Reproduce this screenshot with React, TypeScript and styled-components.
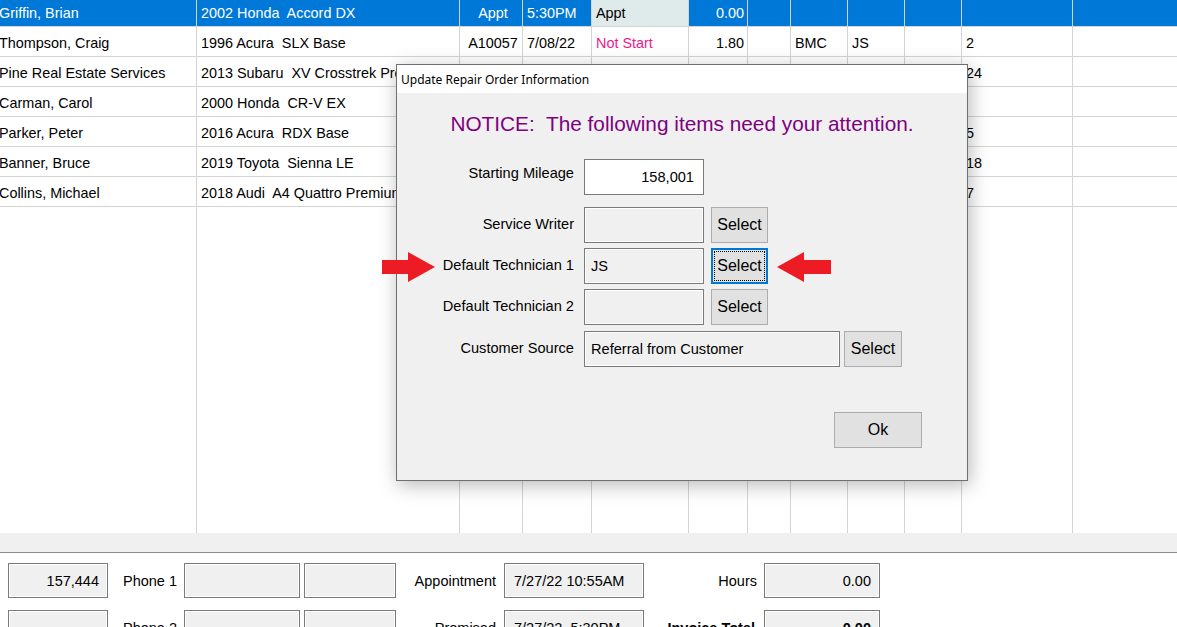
import React from 'react';
import styled, { createGlobalStyle } from 'styled-components';

const GlobalStyle = createGlobalStyle`
  html, body {
    margin: 0;
    padding: 0;
    background: #ffffff;
    overflow: hidden;
  }
  body {
    font-family: 'Liberation Sans', Arial, sans-serif;
    font-size: 14px;
    color: #000000;
  }
  * {
    box-sizing: border-box;
  }
`;

const COLS = '197px 263px 63px 69px 97px 59px 43px 57px 57px 57px 111px 104px';

const Page = styled.div`
  position: relative;
  width: 1177px;
  height: 627px;
  display: flex;
  flex-direction: column;
  overflow: hidden;
`;

const GridArea = styled.div`
  height: 533px;
  flex-shrink: 0;
  overflow: hidden;
  background: #ffffff;
`;

const GridBody = styled.div`
  margin-top: -3px;
  height: 536px;
  display: flex;
  flex-direction: column;
`;

const Row = styled.div<{ $selected?: boolean }>`
  display: grid;
  grid-template-columns: ${COLS};
  height: 30px;
  flex-shrink: 0;
  border-bottom: 1px solid #d4d4d4;
  background: ${p => (p.$selected ? '#0078d7' : '#ffffff')};
  color: ${p => (p.$selected ? '#ffffff' : '#000000')};
`;

const FillerRow = styled.div`
  flex: 1;
  display: grid;
  grid-template-columns: ${COLS};
`;

const Cell = styled.div<{ $align?: 'left' | 'right' | 'center'; $bg?: string; $color?: string; $first?: boolean }>`
  border-right: 1px solid #d4d4d4;
  display: flex;
  align-items: center;
  justify-content: ${p => (p.$align === 'right' ? 'flex-end' : p.$align === 'center' ? 'center' : 'flex-start')};
  padding: ${p => (p.$first ? '0' : p.$align === 'right' ? '0 3px 0 0' : '0 0 0 4px')};
  padding-top: 2px;
  white-space: pre;
  overflow: hidden;
  background: ${p => p.$bg || 'transparent'};
  color: ${p => p.$color || 'inherit'};
  font-size: 14.4px;

  &:last-child {
    border-right: none;
  }
`;

const CellText = styled.span<{ $shift?: number }>`
  margin-left: ${p => p.$shift || 0}px;
`;

const Band = styled.div`
  height: 20px;
  flex-shrink: 0;
  background: #f0f0f0;
  border-bottom: 1px solid #8c8c8c;
`;

const BottomForm = styled.div`
  flex: 1;
  min-height: 0;
  background: #ffffff;
  display: grid;
  grid-template-columns: 100px 76px 116px 96px 108px 140px 120px 116px;
  grid-auto-rows: 35px;
  row-gap: 12px;
  padding: 10px 0 0 8px;
  font-size: 14.5px;
`;

const FormLabel = styled.div<{ $bold?: boolean; $pad: number }>`
  display: flex;
  align-items: center;
  justify-content: flex-end;
  padding-right: ${p => p.$pad}px;
  font-weight: ${p => (p.$bold ? 'bold' : 'normal')};
  white-space: nowrap;
`;

const InfoField = styled.div<{ $align?: 'left' | 'right'; $width?: number; $bold?: boolean }>`
  width: ${p => (p.$width ? `${p.$width}px` : '100%')};
  justify-self: end;
  height: 35px;
  background: #f0f0f0;
  border: 1px solid #7a7a7a;
  box-shadow: inset 0 0 0 1px #ffffff;
  display: flex;
  align-items: center;
  justify-content: ${p => (p.$align === 'right' ? 'flex-end' : 'flex-start')};
  padding: 0 8px 0 9px;
  white-space: pre;
  font-weight: ${p => (p.$bold ? 'bold' : 'normal')};
`;

/* dialog */

const Dialog = styled.div`
  position: absolute;
  left: 396px;
  top: 64px;
  width: 572px;
  height: 417px;
  background: #f0f0f0;
  border: 1px solid #6f6f6f;
  box-shadow: 2px 4px 18px rgba(0, 0, 0, 0.28);
  display: flex;
  flex-direction: column;
`;

const TitleBar = styled.div`
  height: 28px;
  background: #ffffff;
  display: flex;
  align-items: center;
  padding-left: 4px;
  font-family: 'Noto Sans', 'Liberation Sans', sans-serif;
  font-size: 12px;
  color: #000000;
`;

const DialogBody = styled.div`
  display: flex;
  flex-direction: column;
`;

const Notice = styled.div`
  margin-top: 19px;
  text-align: center;
  color: #800080;
  font-size: 20.8px;
  line-height: 24px;
`;

const DRow = styled.div<{ $gap: number }>`
  display: flex;
  align-items: center;
  height: 36px;
  margin-top: ${p => p.$gap}px;
`;

const DLabel = styled.div<{ $lift?: number }>`
  width: 177px;
  margin-right: 10px;
  text-align: right;
  font-size: 14.6px;
  white-space: nowrap;
  padding-bottom: ${p => p.$lift ?? 3}px;
`;

const DField = styled.div<{ $width: number; $white?: boolean; $align?: 'left' | 'right' }>`
  width: ${p => p.$width}px;
  height: 36px;
  background: ${p => (p.$white ? '#ffffff' : '#f0f0f0')};
  border: 1px solid #7a7a7a;
  box-shadow: ${p => (p.$white ? 'none' : 'inset 0 0 0 1px #ffffff')};
  display: flex;
  align-items: center;
  justify-content: ${p => (p.$align === 'right' ? 'flex-end' : 'flex-start')};
  padding: 0 9px 0 6px;
  font-size: 14.6px;
  white-space: pre;
`;

const SelectButton = styled.button<{ $focused?: boolean; $gap?: number; $width?: number }>`
  width: ${p => p.$width || 57}px;
  height: 36px;
  margin-left: ${p => p.$gap ?? 7}px;
  background: #e1e1e1;
  border: ${p => (p.$focused ? '2px solid #0078d7' : '1px solid #adadad')};
  font-family: 'Liberation Sans', Arial, sans-serif;
  font-size: 16px;
  color: #000000;
  padding: 0;
  outline: ${p => (p.$focused ? '1px dotted #000000' : 'none')};
  outline-offset: -4px;
`;

const OkRow = styled.div`
  display: flex;
  justify-content: flex-end;
  padding-right: 45px;
  margin-top: 45px;
`;

const OkButton = styled(SelectButton)`
  width: 88px;
  margin-left: 0;
`;

const ArrowMark = styled.svg<{ $left: number }>`
  position: absolute;
  left: ${p => p.$left}px;
  top: 252px;
  width: 54px;
  height: 30px;
`;

type GridRow = {
  cells: string[];
  selected?: boolean;
};

// cells under the dialog are left blank; only what shows around it is filled
const rows: GridRow[] = [
  { cells: ['Griffin, Brian', '2002 Honda  Accord DX', 'Appt', '5:30PM', 'Appt', '0.00', '', '', '', '', '', ''], selected: true },
  { cells: ['Thompson, Craig', '1996 Acura  SLX Base', 'A10057', '7/08/22', 'Not Start', '1.80', '', 'BMC', 'JS', '', '2', ''] },
  { cells: ['Pine Real Estate Services', '2013 Subaru  XV Crosstrek Premium', '', '', '', '', '', '', '', '', '24', ''] },
  { cells: ['Carman, Carol', '2000 Honda  CR-V EX', '', '', '', '', '', '', '', '', '', ''] },
  { cells: ['Parker, Peter', '2016 Acura  RDX Base', '', '', '', '', '', '', '', '', '5', ''] },
  { cells: ['Banner, Bruce', '2019 Toyota  Sienna LE', '', '', '', '', '', '', '', '', '18', ''] },
  { cells: ['Collins, Michael', '2018 Audi  A4 Quattro Premium Plus', '', '', '', '', '', '', '', '', '7', ''] },
];

const aligns: ('left' | 'right' | 'center')[] = [
  'left', 'left', 'center', 'left', 'left', 'right', 'left', 'left', 'left', 'left', 'left', 'left',
];

const Arrow: React.FC<{ left: number; flip?: boolean }> = ({ left, flip }) => (
  <ArrowMark $left={left} viewBox="0 0 54 30">
    <polygon
      points={flip ? '54,8 27,8 27,0 0,15 27,30 27,22 54,22' : '0,8 26,8 26,0 53,15 26,30 26,22 0,22'}
      fill="#ed1c24"
    />
  </ArrowMark>
);

const App: React.FC = () => {
  return (
    <Page>
      <GlobalStyle />
      <GridArea>
        <GridBody>
          {rows.map((row, ri) => (
            <Row key={ri} $selected={row.selected}>
              {row.cells.map((text, ci) => {
                const isApptCell = row.selected && ci === 4;
                const isNotStart = text === 'Not Start';
                return (
                  <Cell
                    key={ci}
                    $align={aligns[ci]}
                    $first={ci === 0}
                    $bg={isApptCell ? '#dfeaea' : undefined}
                    $color={isApptCell ? '#000000' : isNotStart ? '#f0168c' : undefined}
                  >
                    <CellText $shift={ci === 0 ? -1 : 0}>{text}</CellText>
                  </Cell>
                );
              })}
            </Row>
          ))}
          <FillerRow>
            {aligns.map((_, ci) => (
              <Cell key={ci} />
            ))}
          </FillerRow>
        </GridBody>
      </GridArea>
      <Band />
      <BottomForm>
        <InfoField $align="right">157,444</InfoField>
        <FormLabel $pad={7}>Phone 1</FormLabel>
        <InfoField />
        <InfoField $width={92} />
        <FormLabel $pad={8}>Appointment</FormLabel>
        <InfoField>7/27/22 10:55AM</InfoField>
        <FormLabel $pad={7}>Hours</FormLabel>
        <InfoField $align="right">0.00</InfoField>

        <InfoField />
        <FormLabel $pad={7}>Phone 2</FormLabel>
        <InfoField />
        <InfoField $width={92} />
        <FormLabel $pad={8}>Promised</FormLabel>
        <InfoField>7/27/22  5:30PM</InfoField>
        <FormLabel $pad={9} $bold>Invoice Total</FormLabel>
        <InfoField $align="right" $bold>0.00</InfoField>
      </BottomForm>

      <Dialog>
        <TitleBar>Update Repair Order Information</TitleBar>
        <DialogBody>
          <Notice>NOTICE:&nbsp; The following items need your attention.</Notice>
          <DRow $gap={23}>
            <DLabel $lift={9}>Starting Mileage</DLabel>
            <DField $width={120} $white $align="right">158,001</DField>
          </DRow>
          <DRow $gap={12}>
            <DLabel>Service Writer</DLabel>
            <DField $width={120} />
            <SelectButton>Select</SelectButton>
          </DRow>
          <DRow $gap={5}>
            <DLabel>Default Technician 1</DLabel>
            <DField $width={120}>JS</DField>
            <SelectButton $focused>Select</SelectButton>
          </DRow>
          <DRow $gap={5}>
            <DLabel>Default Technician 2</DLabel>
            <DField $width={120} />
            <SelectButton>Select</SelectButton>
          </DRow>
          <DRow $gap={6}>
            <DLabel>Customer Source</DLabel>
            <DField $width={256}>Referral from Customer</DField>
            <SelectButton $gap={4} $width={58}>Select</SelectButton>
          </DRow>
          <OkRow>
            <OkButton>Ok</OkButton>
          </OkRow>
        </DialogBody>
      </Dialog>

      <Arrow left={382} />
      <Arrow left={777} flip />
    </Page>
  );
};

export default App;
